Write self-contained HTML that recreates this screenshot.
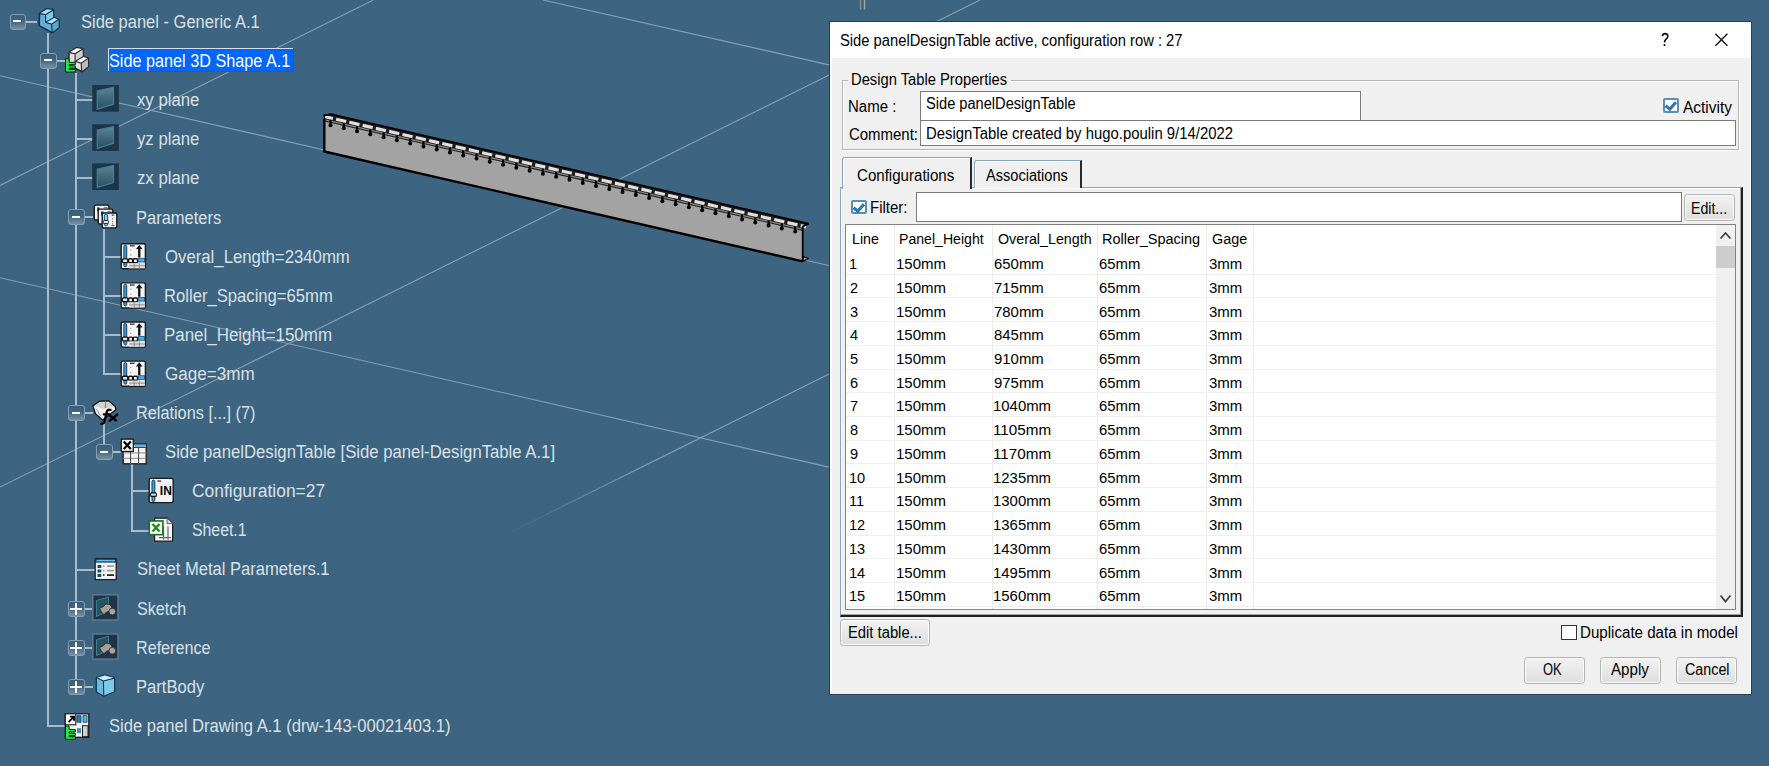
<!DOCTYPE html><html><head><meta charset="utf-8"><style>
*{box-sizing:border-box}
html,body{margin:0;padding:0}
body{width:1769px;height:766px;overflow:hidden;background:#3d6480;position:relative;font-family:"Liberation Sans",sans-serif}
.tx{position:absolute;white-space:nowrap;transform-origin:0 0;line-height:1}
.ab{position:absolute}
.exp{position:absolute;width:16.5px;height:16px;border:1.5px solid #86a0b3;border-radius:3px;background:linear-gradient(#3b5d78,#44657f 45%,#7690a2)}
.exp:before{content:"";position:absolute;left:2.7px;top:5.5px;width:8px;height:2px;background:#f6f8fa}
.exp.plus:before{left:0.8px;width:11.7px;top:6.3px}
.exp.plus:after{content:"";position:absolute;left:5.7px;top:1.4px;width:2px;height:11.7px;background:#f6f8fa}
.vl{position:absolute;width:2px;background:#a9bccb}
.hl{position:absolute;height:2px;background:#a9bccb}
.btn{position:absolute;border:1px solid #b3b3b3;border-radius:3.5px;background:linear-gradient(#f2f2f2,#e6e6e6 60%,#dedede);box-shadow:inset 0 0 0 1px #fafafa}
.inp{position:absolute;background:#fff;border:1px solid #7a7a7a}
</style></head><body>

<svg class="ab" style="left:0;top:0" width="1769" height="766" viewBox="0 0 1769 766">
<line x1="0" y1="75.7" x2="830" y2="265.8" stroke="#87a0b3" stroke-width="1.1" fill="none"/>
<line x1="0" y1="185.4" x2="373.4" y2="0" stroke="#87a0b3" stroke-width="1.1" fill="none"/>
<line x1="0" y1="277.7" x2="830" y2="467.4" stroke="#87a0b3" stroke-width="1.1" fill="none"/>
<line x1="0" y1="487" x2="980" y2="0" stroke="#87a0b3" stroke-width="1.1" fill="none"/>
<line x1="543" y1="0" x2="830" y2="65.1" stroke="#87a0b3" stroke-width="1.1" fill="none"/>
<defs><linearGradient id="l6g" gradientUnits="userSpaceOnUse" x1="505" y1="535" x2="640" y2="468"><stop offset="0" stop-color="#87a0b3" stop-opacity="0"/><stop offset="1" stop-color="#87a0b3" stop-opacity="1"/></linearGradient></defs>
<line x1="505" y1="535" x2="830" y2="373.5" stroke="url(#l6g)" stroke-width="1.1"/>
<line x1="860.5" y1="0" x2="860.5" y2="9.6" stroke="#8f8a84" stroke-width="1.5"/>
<line x1="864.5" y1="0" x2="864.5" y2="9.6" stroke="#9aa4ab" stroke-width="1.5"/>
</svg>
<svg class="ab" style="left:0;top:0" width="840" height="300">
<polygon points="323.4,116.53 802.7,226.29 802.7,261.3 323.4,151.5" fill="#a3a3a3"/>
<polygon points="323.4,115.03 330.7,114.2 808.6,223.64 802.7,226.49 802.7,230.89 323.4,121.13" fill="#1e1e1e"/>
<polygon points="325,119.19 802,228.43 802,229.63 325,120.39" fill="#8c8c8c"/>
<polygon points="325.50,115.21 333.20,116.97 332.60,120.07 324.90,118.31" fill="#e0e0e0"/>
<polygon points="336.38,117.70 346.47,120.01 345.87,123.11 335.77,120.80" fill="#e0e0e0"/>
<polygon points="349.65,120.74 359.75,123.05 359.15,126.15 349.05,123.84" fill="#e0e0e0"/>
<polygon points="362.93,123.78 373.02,126.09 372.42,129.19 362.32,126.88" fill="#e0e0e0"/>
<polygon points="376.20,126.82 386.30,129.13 385.70,132.23 375.60,129.92" fill="#e0e0e0"/>
<polygon points="389.48,129.86 399.57,132.17 398.97,135.27 388.88,132.96" fill="#e0e0e0"/>
<polygon points="402.75,132.90 412.85,135.21 412.25,138.31 402.15,136.00" fill="#e0e0e0"/>
<polygon points="416.03,135.94 426.12,138.25 425.52,141.35 415.43,139.04" fill="#e0e0e0"/>
<polygon points="429.30,138.98 439.40,141.29 438.80,144.39 428.70,142.08" fill="#e0e0e0"/>
<polygon points="442.58,142.02 452.68,144.33 452.07,147.43 441.98,145.12" fill="#e0e0e0"/>
<polygon points="455.85,145.06 465.95,147.37 465.35,150.47 455.25,148.16" fill="#e0e0e0"/>
<polygon points="469.12,148.10 479.22,150.41 478.62,153.51 468.52,151.20" fill="#e0e0e0"/>
<polygon points="482.40,151.14 492.50,153.45 491.90,156.55 481.80,154.24" fill="#e0e0e0"/>
<polygon points="495.68,154.18 505.78,156.49 505.18,159.59 495.08,157.28" fill="#e0e0e0"/>
<polygon points="508.95,157.22 519.05,159.53 518.45,162.63 508.35,160.32" fill="#e0e0e0"/>
<polygon points="522.23,160.26 532.33,162.57 531.73,165.67 521.62,163.36" fill="#e0e0e0"/>
<polygon points="535.50,163.30 545.60,165.61 545.00,168.71 534.90,166.40" fill="#e0e0e0"/>
<polygon points="548.77,166.34 558.88,168.65 558.27,171.75 548.17,169.44" fill="#e0e0e0"/>
<polygon points="562.05,169.38 572.15,171.69 571.55,174.79 561.45,172.48" fill="#e0e0e0"/>
<polygon points="575.33,172.42 585.43,174.73 584.83,177.83 574.73,175.52" fill="#e0e0e0"/>
<polygon points="588.60,175.46 598.70,177.77 598.10,180.87 588.00,178.56" fill="#e0e0e0"/>
<polygon points="601.88,178.50 611.98,180.81 611.38,183.91 601.28,181.60" fill="#e0e0e0"/>
<polygon points="615.15,181.54 625.25,183.85 624.65,186.95 614.55,184.64" fill="#e0e0e0"/>
<polygon points="628.43,184.58 638.53,186.89 637.93,189.99 627.83,187.68" fill="#e0e0e0"/>
<polygon points="641.70,187.62 651.80,189.93 651.20,193.03 641.10,190.72" fill="#e0e0e0"/>
<polygon points="654.98,190.66 665.08,192.97 664.48,196.07 654.38,193.76" fill="#e0e0e0"/>
<polygon points="668.25,193.70 678.35,196.01 677.75,199.11 667.65,196.80" fill="#e0e0e0"/>
<polygon points="681.52,196.74 691.62,199.05 691.02,202.15 680.92,199.84" fill="#e0e0e0"/>
<polygon points="694.80,199.78 704.90,202.09 704.30,205.19 694.20,202.88" fill="#e0e0e0"/>
<polygon points="708.08,202.82 718.18,205.13 717.58,208.23 707.48,205.92" fill="#e0e0e0"/>
<polygon points="721.35,205.86 731.45,208.17 730.85,211.27 720.75,208.96" fill="#e0e0e0"/>
<polygon points="734.63,208.90 744.73,211.21 744.13,214.31 734.03,212.00" fill="#e0e0e0"/>
<polygon points="747.90,211.94 758.00,214.25 757.40,217.35 747.30,215.04" fill="#e0e0e0"/>
<polygon points="761.18,214.98 771.28,217.29 770.68,220.39 760.58,218.08" fill="#e0e0e0"/>
<polygon points="774.45,218.02 784.55,220.33 783.95,223.43 773.85,221.12" fill="#e0e0e0"/>
<polygon points="787.73,221.06 797.83,223.37 797.23,226.47 787.12,224.16" fill="#e0e0e0"/>
<polygon points="801.00,224.10 806.50,225.36 805.90,228.46 800.40,227.20" fill="#e0e0e0"/>
<path d="M330.50,120.15V124.95" stroke="#000" stroke-width="2.2"/><circle cx="330.50" cy="125.15" r="2.0" fill="#000"/>
<path d="M343.77,123.19V127.99" stroke="#000" stroke-width="2.2"/><circle cx="343.77" cy="128.19" r="2.0" fill="#000"/>
<path d="M357.05,126.23V131.03" stroke="#000" stroke-width="2.2"/><circle cx="357.05" cy="131.23" r="2.0" fill="#000"/>
<path d="M370.32,129.27V134.07" stroke="#000" stroke-width="2.2"/><circle cx="370.32" cy="134.27" r="2.0" fill="#000"/>
<path d="M383.60,132.31V137.11" stroke="#000" stroke-width="2.2"/><circle cx="383.60" cy="137.31" r="2.0" fill="#000"/>
<path d="M396.88,135.35V140.15" stroke="#000" stroke-width="2.2"/><circle cx="396.88" cy="140.35" r="2.0" fill="#000"/>
<path d="M410.15,138.39V143.19" stroke="#000" stroke-width="2.2"/><circle cx="410.15" cy="143.39" r="2.0" fill="#000"/>
<path d="M423.43,141.43V146.23" stroke="#000" stroke-width="2.2"/><circle cx="423.43" cy="146.43" r="2.0" fill="#000"/>
<path d="M436.70,144.47V149.27" stroke="#000" stroke-width="2.2"/><circle cx="436.70" cy="149.47" r="2.0" fill="#000"/>
<path d="M449.98,147.51V152.31" stroke="#000" stroke-width="2.2"/><circle cx="449.98" cy="152.51" r="2.0" fill="#000"/>
<path d="M463.25,150.55V155.35" stroke="#000" stroke-width="2.2"/><circle cx="463.25" cy="155.55" r="2.0" fill="#000"/>
<path d="M476.52,153.59V158.39" stroke="#000" stroke-width="2.2"/><circle cx="476.52" cy="158.59" r="2.0" fill="#000"/>
<path d="M489.80,156.63V161.43" stroke="#000" stroke-width="2.2"/><circle cx="489.80" cy="161.63" r="2.0" fill="#000"/>
<path d="M503.08,159.67V164.47" stroke="#000" stroke-width="2.2"/><circle cx="503.08" cy="164.67" r="2.0" fill="#000"/>
<path d="M516.35,162.71V167.51" stroke="#000" stroke-width="2.2"/><circle cx="516.35" cy="167.71" r="2.0" fill="#000"/>
<path d="M529.62,165.75V170.55" stroke="#000" stroke-width="2.2"/><circle cx="529.62" cy="170.75" r="2.0" fill="#000"/>
<path d="M542.90,168.79V173.59" stroke="#000" stroke-width="2.2"/><circle cx="542.90" cy="173.79" r="2.0" fill="#000"/>
<path d="M556.17,171.83V176.63" stroke="#000" stroke-width="2.2"/><circle cx="556.17" cy="176.83" r="2.0" fill="#000"/>
<path d="M569.45,174.87V179.67" stroke="#000" stroke-width="2.2"/><circle cx="569.45" cy="179.87" r="2.0" fill="#000"/>
<path d="M582.73,177.91V182.71" stroke="#000" stroke-width="2.2"/><circle cx="582.73" cy="182.91" r="2.0" fill="#000"/>
<path d="M596.00,180.95V185.75" stroke="#000" stroke-width="2.2"/><circle cx="596.00" cy="185.95" r="2.0" fill="#000"/>
<path d="M609.28,183.99V188.79" stroke="#000" stroke-width="2.2"/><circle cx="609.28" cy="188.99" r="2.0" fill="#000"/>
<path d="M622.55,187.03V191.83" stroke="#000" stroke-width="2.2"/><circle cx="622.55" cy="192.03" r="2.0" fill="#000"/>
<path d="M635.83,190.07V194.87" stroke="#000" stroke-width="2.2"/><circle cx="635.83" cy="195.07" r="2.0" fill="#000"/>
<path d="M649.10,193.11V197.91" stroke="#000" stroke-width="2.2"/><circle cx="649.10" cy="198.11" r="2.0" fill="#000"/>
<path d="M662.38,196.15V200.95" stroke="#000" stroke-width="2.2"/><circle cx="662.38" cy="201.15" r="2.0" fill="#000"/>
<path d="M675.65,199.19V203.99" stroke="#000" stroke-width="2.2"/><circle cx="675.65" cy="204.19" r="2.0" fill="#000"/>
<path d="M688.92,202.23V207.03" stroke="#000" stroke-width="2.2"/><circle cx="688.92" cy="207.23" r="2.0" fill="#000"/>
<path d="M702.20,205.27V210.07" stroke="#000" stroke-width="2.2"/><circle cx="702.20" cy="210.27" r="2.0" fill="#000"/>
<path d="M715.48,208.31V213.11" stroke="#000" stroke-width="2.2"/><circle cx="715.48" cy="213.31" r="2.0" fill="#000"/>
<path d="M728.75,211.35V216.15" stroke="#000" stroke-width="2.2"/><circle cx="728.75" cy="216.35" r="2.0" fill="#000"/>
<path d="M742.03,214.39V219.19" stroke="#000" stroke-width="2.2"/><circle cx="742.03" cy="219.39" r="2.0" fill="#000"/>
<path d="M755.30,217.43V222.23" stroke="#000" stroke-width="2.2"/><circle cx="755.30" cy="222.43" r="2.0" fill="#000"/>
<path d="M768.58,220.47V225.27" stroke="#000" stroke-width="2.2"/><circle cx="768.58" cy="225.47" r="2.0" fill="#000"/>
<path d="M781.85,223.51V228.31" stroke="#000" stroke-width="2.2"/><circle cx="781.85" cy="228.51" r="2.0" fill="#000"/>
<path d="M795.12,226.55V231.35" stroke="#000" stroke-width="2.2"/><circle cx="795.12" cy="231.55" r="2.0" fill="#000"/>
<path d="M323.4,115.03Q325,115.5 330.7,114.2L808.6,223.64" stroke="#000" stroke-width="1.7" fill="none" stroke-linejoin="round"/>
<path d="M324.3,118.5V151.5L802.7,261.3" stroke="#000" stroke-width="2.4" fill="none" stroke-linejoin="round"/>
<path d="M802.7,226.29V261" stroke="#000" stroke-width="1.8" fill="none"/>
<path d="M808.6,223.64L802.7,226.49" stroke="#000" stroke-width="1.8" fill="none"/>
<polygon points="802.7,261.3 808.3,258.3 803.5,256.8" fill="#d6d6d6" stroke="#000" stroke-width="1.4" stroke-linejoin="round"/>
</svg>
<div class="vl" style="left:47.4px;top:33.0px;height:694.0px"></div>
<div class="hl" style="left:48.4px;top:725.3px;width:16.6px"></div>
<div class="hl" style="left:25.0px;top:20.6px;width:12.0px"></div>
<div class="hl" style="left:56.0px;top:59.8px;width:9.0px"></div>
<div class="vl" style="left:75.2px;top:73.0px;height:614.1px"></div>
<div class="hl" style="left:76.2px;top:98.9px;width:16.8px"></div>
<div class="hl" style="left:76.2px;top:138.0px;width:16.8px"></div>
<div class="hl" style="left:76.2px;top:177.2px;width:16.8px"></div>
<div class="hl" style="left:84.0px;top:216.3px;width:9.0px"></div>
<div class="hl" style="left:84.0px;top:412.1px;width:9.0px"></div>
<div class="hl" style="left:84.0px;top:607.9px;width:9.0px"></div>
<div class="hl" style="left:84.0px;top:647.0px;width:9.0px"></div>
<div class="hl" style="left:84.0px;top:686.1px;width:9.0px"></div>
<div class="hl" style="left:76.2px;top:568.7px;width:18.8px"></div>
<div class="vl" style="left:103.0px;top:229.0px;height:145.9px"></div>
<div class="hl" style="left:104.0px;top:255.5px;width:17.0px"></div>
<div class="hl" style="left:104.0px;top:294.7px;width:17.0px"></div>
<div class="hl" style="left:104.0px;top:333.8px;width:17.0px"></div>
<div class="hl" style="left:104.0px;top:372.9px;width:17.0px"></div>
<div class="vl" style="left:103.0px;top:424.0px;height:22.0px"></div>
<div class="hl" style="left:111.0px;top:451.2px;width:10.0px"></div>
<div class="vl" style="left:131.0px;top:464.0px;height:67.5px"></div>
<div class="hl" style="left:132.0px;top:490.4px;width:17.0px"></div>
<div class="hl" style="left:132.0px;top:529.5px;width:17.0px"></div>
<div class="exp" style="left:9.8px;top:13.6px"></div>
<div class="exp" style="left:40.4px;top:52.8px"></div>
<div class="exp" style="left:68.2px;top:209.3px"></div>
<div class="exp" style="left:68.2px;top:405.1px"></div>
<div class="exp" style="left:96.0px;top:444.2px"></div>
<div class="exp plus" style="left:68.2px;top:600.9px"></div>
<div class="exp plus" style="left:68.2px;top:640.0px"></div>
<div class="exp plus" style="left:68.2px;top:679.1px"></div>
<svg class="ab" style="left:0;top:0" width="840" height="766">
<defs><linearGradient id="pg" x1="0" y1="0" x2="0" y2="1"><stop offset="0" stop-color="#5a8494"/><stop offset="1" stop-color="#2b4f60"/></linearGradient></defs>
<polygon points="39.50,13.50 47.00,8.80 53.40,9.60 53.60,17.60 58.80,19.20 59.00,27.50 52.40,32.80 39.20,25.60" fill="#63b0d6" stroke="#0c3450" stroke-width="1.6" stroke-linejoin="round"/>
<polygon points="39.80,13.60 47.00,9.20 53.00,10.00 45.60,14.80" fill="#a9dcf2"/>
<polygon points="45.60,14.80 53.00,10.00 53.20,17.80 45.60,22.40" fill="#84c8e6"/>
<polygon points="45.60,22.40 53.40,17.80 58.40,19.50 51.60,24.20" fill="#b0e2f6"/>
<polygon points="51.60,24.20 58.40,19.50 58.60,27.30 52.20,32.20" fill="#5aa8cf"/>
<path d="M39.80,13.60L45.60,14.80L45.60,22.40L51.60,24.20L52.30,32.50M45.60,14.80L53.20,10.00M51.60,24.20L58.60,19.40M45.60,22.40L53.40,17.80" stroke="#0c3450" stroke-width="1.1" fill="none"/>
<polygon points="69.00,52.50 76.50,47.80 82.90,48.60 83.10,56.60 88.30,58.20 88.50,66.50 81.90,71.80 68.70,64.60" fill="#e2e2e2" stroke="#2a2a2a" stroke-width="1.6" stroke-linejoin="round"/>
<polygon points="69.30,52.60 76.50,48.20 82.50,49.00 75.10,53.80" fill="#ffffff"/>
<polygon points="75.10,53.80 82.50,49.00 82.70,56.80 75.10,61.40" fill="#d0d0d0"/>
<polygon points="75.10,61.40 82.90,56.80 87.90,58.50 81.10,63.20" fill="#f4f4f4"/>
<polygon points="81.10,63.20 87.90,58.50 88.10,66.30 81.70,71.20" fill="#bcbcbc"/>
<path d="M69.30,52.60L75.10,53.80L75.10,61.40L81.10,63.20L81.80,71.50M75.10,53.80L82.70,49.00M81.10,63.20L88.10,58.40M75.10,61.40L82.90,56.80" stroke="#2a2a2a" stroke-width="1.1" fill="none"/>
<path d="M65.5,58.7h3.6v3.6h6.2v2.3h-6.2v1.3h6.2v2.3h-6.2v1.2h6.2v2.6h-9.8z" fill="#1ff044" stroke="#05200a" stroke-width="1"/>
<rect x="92.2" y="85.10" width="26.6" height="26.6" fill="#1f3445"/><polygon points="97.3,90.90 113.5,87.30 113.5,104.20 97.3,109.10" fill="url(#pg)" stroke="#3b7ea8" stroke-width="1.3"/>
<rect x="92.2" y="124.25" width="26.6" height="26.6" fill="#1f3445"/><polygon points="97.3,130.05 113.5,126.45 113.5,143.35 97.3,148.25" fill="url(#pg)" stroke="#3b7ea8" stroke-width="1.3"/>
<rect x="92.2" y="163.40" width="26.6" height="26.6" fill="#1f3445"/><polygon points="97.3,169.20 113.5,165.60 113.5,182.50 97.3,187.40" fill="url(#pg)" stroke="#3b7ea8" stroke-width="1.3"/>
<rect x="94.30" y="205.15" width="14.60" height="14.80" rx="1.5" fill="#f3f3f3" stroke="#1b1b1b" stroke-width="1.4"/>
<rect x="97.10" y="207.45" width="2.5" height="4" fill="#0a3c66"/>
<rect x="103.60" y="206.95" width="4" height="1.5" fill="#888"/>
<rect x="98.20" y="209.15" width="14.60" height="14.80" rx="1.5" fill="#f3f3f3" stroke="#1b1b1b" stroke-width="1.4"/>
<rect x="101.00" y="211.45" width="2.5" height="4" fill="#0a3c66"/>
<rect x="107.50" y="210.95" width="4" height="1.5" fill="#888"/>
<rect x="102.20" y="213.05" width="14.60" height="14.80" rx="1.5" fill="#f3f3f3" stroke="#1b1b1b" stroke-width="1.4"/>
<rect x="104.30" y="214.35" width="3.4" height="11.5" rx="1.5" fill="#7fd0f2" stroke="#0a4a78" stroke-width="1"/>
<rect x="103.40" y="220.55" width="5.2" height="3" rx="1" fill="#e8e8e8" stroke="#222" stroke-width="1"/>
<rect x="112.10" y="215.05" width="1" height="1" fill="#555"/>
<rect x="112.10" y="218.35" width="1" height="1" fill="#555"/>
<rect x="112.10" y="220.85" width="1" height="1" fill="#555"/>
<rect x="112.10" y="223.35" width="1" height="1" fill="#555"/>
<rect x="111.50" y="214.55" width="3" height="0.9" fill="#444"/><rect x="111.50" y="224.95" width="3" height="0.9" fill="#444"/>
<rect x="121.20" y="243.70" width="24.20" height="25.10" rx="1.5" fill="#f3f3f3" stroke="#1b1b1b" stroke-width="1.4"/>
<rect x="123.9" y="245.20" width="2.8" height="21.5" rx="1.4" fill="#3fa3d6" stroke="#0a3c66" stroke-width="1"/>
<rect x="130" y="245.20" width="4.5" height="1.3" fill="#333"/>
<rect x="130.3" y="249.50" width="1" height="1" fill="#888"/><rect x="130.3" y="254.50" width="1" height="1" fill="#888"/>
<path d="M139.2,244.90L142.5,249.10L140.4,249.10L140.4,257.50L138.1,257.50L138.1,249.10L136,249.10Z" fill="#111"/>
<rect x="122.4" y="258.80" width="5.4" height="3.8" rx="1" fill="#e6e6e6" stroke="#111" stroke-width="1.3"/>
<rect x="128.6" y="258.80" width="4" height="4" rx="1.2" fill="#fafafa" stroke="#111" stroke-width="1.4"/>
<rect x="133.3" y="258.80" width="4.2" height="4" rx="1.2" fill="#fafafa" stroke="#111" stroke-width="1.4"/>
<path d="M127.8,260.00h1M132.6,260.00h0.8" stroke="#111" stroke-width="1.2"/>
<rect x="138.2" y="258.30" width="6.2" height="3.6" fill="#4aaee2" stroke="#0a4a78" stroke-width="0.8"/>
<rect x="129.2" y="263.10" width="15.6" height="5.3" fill="#dedede"/>
<path d="M129.2,265.70h15.6M134.2,263.10v5.3M139.4,263.10v5.3" stroke="#8a8a8a" stroke-width="0.9"/>
<rect x="121.20" y="282.85" width="24.20" height="25.10" rx="1.5" fill="#f3f3f3" stroke="#1b1b1b" stroke-width="1.4"/>
<rect x="123.9" y="284.35" width="2.8" height="21.5" rx="1.4" fill="#3fa3d6" stroke="#0a3c66" stroke-width="1"/>
<rect x="130" y="284.35" width="4.5" height="1.3" fill="#333"/>
<rect x="130.3" y="288.65" width="1" height="1" fill="#888"/><rect x="130.3" y="293.65" width="1" height="1" fill="#888"/>
<path d="M139.2,284.05L142.5,288.25L140.4,288.25L140.4,296.65L138.1,296.65L138.1,288.25L136,288.25Z" fill="#111"/>
<rect x="122.4" y="297.95" width="5.4" height="3.8" rx="1" fill="#e6e6e6" stroke="#111" stroke-width="1.3"/>
<rect x="128.6" y="297.95" width="4" height="4" rx="1.2" fill="#fafafa" stroke="#111" stroke-width="1.4"/>
<rect x="133.3" y="297.95" width="4.2" height="4" rx="1.2" fill="#fafafa" stroke="#111" stroke-width="1.4"/>
<path d="M127.8,299.15h1M132.6,299.15h0.8" stroke="#111" stroke-width="1.2"/>
<rect x="138.2" y="297.45" width="6.2" height="3.6" fill="#4aaee2" stroke="#0a4a78" stroke-width="0.8"/>
<rect x="129.2" y="302.25" width="15.6" height="5.3" fill="#dedede"/>
<path d="M129.2,304.85h15.6M134.2,302.25v5.3M139.4,302.25v5.3" stroke="#8a8a8a" stroke-width="0.9"/>
<rect x="121.20" y="322.00" width="24.20" height="25.10" rx="1.5" fill="#f3f3f3" stroke="#1b1b1b" stroke-width="1.4"/>
<rect x="123.9" y="323.50" width="2.8" height="21.5" rx="1.4" fill="#3fa3d6" stroke="#0a3c66" stroke-width="1"/>
<rect x="130" y="323.50" width="4.5" height="1.3" fill="#333"/>
<rect x="130.3" y="327.80" width="1" height="1" fill="#888"/><rect x="130.3" y="332.80" width="1" height="1" fill="#888"/>
<path d="M139.2,323.20L142.5,327.40L140.4,327.40L140.4,335.80L138.1,335.80L138.1,327.40L136,327.40Z" fill="#111"/>
<rect x="122.4" y="337.10" width="5.4" height="3.8" rx="1" fill="#e6e6e6" stroke="#111" stroke-width="1.3"/>
<rect x="128.6" y="337.10" width="4" height="4" rx="1.2" fill="#fafafa" stroke="#111" stroke-width="1.4"/>
<rect x="133.3" y="337.10" width="4.2" height="4" rx="1.2" fill="#fafafa" stroke="#111" stroke-width="1.4"/>
<path d="M127.8,338.30h1M132.6,338.30h0.8" stroke="#111" stroke-width="1.2"/>
<rect x="138.2" y="336.60" width="6.2" height="3.6" fill="#4aaee2" stroke="#0a4a78" stroke-width="0.8"/>
<rect x="129.2" y="341.40" width="15.6" height="5.3" fill="#dedede"/>
<path d="M129.2,344.00h15.6M134.2,341.40v5.3M139.4,341.40v5.3" stroke="#8a8a8a" stroke-width="0.9"/>
<rect x="121.20" y="361.15" width="24.20" height="25.10" rx="1.5" fill="#f3f3f3" stroke="#1b1b1b" stroke-width="1.4"/>
<rect x="123.9" y="362.65" width="2.8" height="21.5" rx="1.4" fill="#3fa3d6" stroke="#0a3c66" stroke-width="1"/>
<rect x="130" y="362.65" width="4.5" height="1.3" fill="#333"/>
<rect x="130.3" y="366.95" width="1" height="1" fill="#888"/><rect x="130.3" y="371.95" width="1" height="1" fill="#888"/>
<path d="M139.2,362.35L142.5,366.55L140.4,366.55L140.4,374.95L138.1,374.95L138.1,366.55L136,366.55Z" fill="#111"/>
<rect x="122.4" y="376.25" width="5.4" height="3.8" rx="1" fill="#e6e6e6" stroke="#111" stroke-width="1.3"/>
<rect x="128.6" y="376.25" width="4" height="4" rx="1.2" fill="#fafafa" stroke="#111" stroke-width="1.4"/>
<rect x="133.3" y="376.25" width="4.2" height="4" rx="1.2" fill="#fafafa" stroke="#111" stroke-width="1.4"/>
<path d="M127.8,377.45h1M132.6,377.45h0.8" stroke="#111" stroke-width="1.2"/>
<rect x="138.2" y="375.75" width="6.2" height="3.6" fill="#4aaee2" stroke="#0a4a78" stroke-width="0.8"/>
<rect x="129.2" y="380.55" width="15.6" height="5.3" fill="#dedede"/>
<path d="M129.2,383.15h15.6M134.2,380.55v5.3M139.4,380.55v5.3" stroke="#8a8a8a" stroke-width="0.9"/>
<polygon points="92.80,405.80 99.60,401.20 108.50,400.80 115.20,406.50 116.00,409.50 108.00,416.00 102.50,420.00 95.50,413.80" fill="#efefef" stroke="#1a1a1a" stroke-width="1.4" stroke-linejoin="round"/>
<polygon points="94.50,406.00 100.00,402.30 108.00,402.00 113.50,406.50 104.00,409.00" fill="#d2d2d2"/>
<path d="M105.5,401.50V408.00" stroke="#8a8a8a" stroke-width="1.3"/>
<path d="M96.5,409.00L100.5,416.00" stroke="#9a9a9a" stroke-width="1"/>
<path d="M110.6,410.00Q107.5,408.80 106.6,412.50L104.6,421.00Q103.8,424.00 101.2,423.80M103.8,414.30H109" stroke="#000" stroke-width="2.3" fill="none" stroke-linecap="round"/>
<path d="M109,414.80L116,420.50M117.3,414.50L109.5,420.80" stroke="#000" stroke-width="2.3" fill="none" stroke-linecap="round"/>
<rect x="123.20" y="444.10" width="23" height="19.7" fill="#f4f4f4" stroke="#1b1b1b" stroke-width="1.3"/>
<rect x="134.60" y="444.50" width="11.3" height="3" fill="#5ab4e4"/>
<path d="M123.20,452.90h23" stroke="#8a8a8a" stroke-width="1"/>
<path d="M123.20,458.30h23" stroke="#8a8a8a" stroke-width="1"/>
<path d="M123.20,447.50h23M130.60,447.50v16.3M138.60,447.50v16.3" stroke="#444" stroke-width="1"/>
<rect x="121.3" y="439.15" width="12" height="12.3" fill="#f6f6f6" stroke="#1b1b1b" stroke-width="1.3"/>
<path d="M123.8,441.45L130.8,448.95M130.8,441.45L123.8,448.95" stroke="#000" stroke-width="2.2"/>
<rect x="149.20" y="478.40" width="24.00" height="24.20" rx="1.5" fill="#f3f3f3" stroke="#1b1b1b" stroke-width="1.4"/>
<rect x="152" y="480.10" width="2.8" height="21.5" rx="1.4" fill="#3fa3d6" stroke="#0a3c66" stroke-width="1"/>
<rect x="150.6" y="492.90" width="5.8" height="3.5" rx="1" fill="#ddd" stroke="#111" stroke-width="1.1"/>
<rect x="157.5" y="480.40" width="3.5" height="1.3" fill="#333"/>
<text x="159.8" y="495.40" font-family="Liberation Sans" font-weight="bold" font-size="12.5" fill="#000" textLength="12" lengthAdjust="spacingAndGlyphs">IN</text>
<path d="M154.60,518.15h12.5l5.5,5.5v17.5h-18z" fill="#f6f6f6" stroke="#1b1b1b" stroke-width="1.2"/>
<path d="M167.10,518.15v5.5h5.5" fill="#ddd" stroke="#444" stroke-width="0.8"/>
<path d="M163.50,526.55v13M168.00,526.55v13M159.00,537.55h12" stroke="#666" stroke-width="1.2"/>
<rect x="149.3" y="520.95" width="13.6" height="13.7" fill="#fff" stroke="#187018" stroke-width="1.6"/>
<path d="M152.5,524.05L159.5,531.55M159.5,524.05L152.5,531.55" stroke="#1f8a1f" stroke-width="2.4"/>
<rect x="95.2" y="558.60" width="21" height="21" fill="#f4f4f4" stroke="#222" stroke-width="1.3"/>
<rect x="95.2" y="558.60" width="21" height="4" fill="#0a3a5a"/>
<rect x="96.5" y="559.80" width="18.5" height="1.6" fill="#6cbde4"/>
<rect x="97.5" y="565.00" width="3.8" height="3" fill="#0f4f78"/>
<rect x="103" y="565.30" width="1.5" height="1.5" fill="#999"/><rect x="107" y="565.30" width="7" height="1.6" fill="#999"/>
<rect x="97.5" y="569.50" width="3.8" height="3" fill="#0f4f78"/>
<rect x="103" y="569.80" width="1.5" height="1.5" fill="#999"/><rect x="107" y="569.80" width="7" height="1.6" fill="#999"/>
<rect x="97.5" y="574.00" width="3.8" height="3" fill="#0f4f78"/>
<rect x="103" y="574.30" width="1.5" height="1.5" fill="#111"/><rect x="107" y="574.30" width="7" height="1.6" fill="#111"/>
<rect x="92.8" y="594.80" width="25.2" height="25.2" fill="#1e3447" stroke="#61798b" stroke-width="1.5"/>
<polygon points="96.5,600.50 108.5,597.00 108.5,611.00 96.5,616.50" fill="#2c5262" stroke="#3f7f92" stroke-width="1"/>
<path d="M99.5,608.50L103.5,606.50L106,604.00L109.5,604.50L112,607.00L110,611.00L106.5,612.00L104,614.50L101.5,612.00Z" fill="#a4a09c" stroke="#222" stroke-width="0.8"/>
<circle cx="112.3" cy="611.60" r="3.4" fill="#a8a4a0" stroke="#222" stroke-width="0.8"/>
<rect x="92.8" y="633.95" width="25.2" height="25.2" fill="#1e3447" stroke="#61798b" stroke-width="1.5"/>
<polygon points="96.5,639.65 108.5,636.15 108.5,650.15 96.5,655.65" fill="#2c5262" stroke="#3f7f92" stroke-width="1"/>
<path d="M99.5,647.65L103.5,645.65L106,643.15L109.5,643.65L112,646.15L110,650.15L106.5,651.15L104,653.65L101.5,651.15Z" fill="#a4a09c" stroke="#222" stroke-width="0.8"/>
<circle cx="112.3" cy="650.75" r="3.4" fill="#a8a4a0" stroke="#222" stroke-width="0.8"/>
<polygon points="96.3,677.50 105,674.80 114.6,677.80 114.6,691.50 103.8,696.20 96.3,692.00" fill="#6cb8e0" stroke="#0d3a55" stroke-width="1.3" stroke-linejoin="round"/>
<polygon points="97,677.70 105,675.50 114,678.00 103,680.80" fill="#c4ecfa"/>
<polygon points="103.4,681.00 114,678.30 114,691.20 103.8,695.50" fill="#7fc8ea"/>
<path d="M97,677.70L103.4,681.00L103.8,695.80M103.4,681.00L114.3,678.20" stroke="#0d3a55" stroke-width="1.1" fill="none"/>
<rect x="65.3" y="713.80" width="23.5" height="23.5" fill="#f2f2f2" stroke="#1b1b1b" stroke-width="1.3"/>
<rect x="65.3" y="713.80" width="10.5" height="11" fill="#fff" stroke="#1b1b1b" stroke-width="1.1"/>
<path d="M68.5,722.20L73,717.70M70,716.70h4v4" stroke="#000" stroke-width="1.8" fill="none"/>
<rect x="77" y="715.70" width="4" height="6.5" fill="#2a7db0" stroke="#0a3c66" stroke-width="0.8"/><rect x="83" y="715.70" width="4" height="6.5" fill="#5ab2e2" stroke="#0a3c66" stroke-width="0.8"/>
<rect x="77" y="728.20" width="4" height="5" fill="#3a8cc0"/>
<rect x="82.5" y="725.70" width="5.5" height="11" fill="#cfcfcf" stroke="#111" stroke-width="0.9"/>
<path d="M65.5,725.9999999999999h3.6v3.6h6.2v2.3h-6.2v1.3h6.2v2.3h-6.2v1.2h6.2v2.6h-9.8z" fill="#1ff044" stroke="#05200a" stroke-width="1"/>
</svg>
<div class="tx" style="left:80.70px;top:14.04px;font-size:17.2px;color:#d9e1e7;transform-origin:0 14.56px;transform:scale(0.9593,1.05);">Side panel - Generic A.1</div>
<div class="ab" style="left:108px;top:48.3px;width:185px;height:23.2px;background:#0266fc;border-top:1.5px solid #d4e0f4;border-left:1.5px solid #d4e0f4;box-shadow:1px 1px 0 #4a5560"></div>
<div class="tx" style="left:109.40px;top:52.74px;font-size:17.2px;color:#ffffff;transform-origin:0 14.56px;transform:scale(0.9435,1.05);">Side panel 3D Shape A.1</div>
<div class="tx" style="left:137.00px;top:92.24px;font-size:17.2px;color:#d9e1e7;transform-origin:0 14.56px;transform:scale(0.9739,1.05);">xy plane</div>
<div class="tx" style="left:137.00px;top:131.34px;font-size:17.2px;color:#d9e1e7;transform-origin:0 14.56px;transform:scale(0.9739,1.05);">yz plane</div>
<div class="tx" style="left:137.00px;top:170.44px;font-size:17.2px;color:#d9e1e7;transform-origin:0 14.56px;transform:scale(0.9739,1.05);">zx plane</div>
<div class="tx" style="left:136.04px;top:209.54px;font-size:17.2px;color:#d9e1e7;transform-origin:0 14.56px;transform:scale(0.9583,1.05);">Parameters</div>
<div class="tx" style="left:165.00px;top:248.64px;font-size:17.2px;color:#d9e1e7;transform-origin:0 14.56px;transform:scale(0.9744,1.05);">Overal_Length=2340mm</div>
<div class="tx" style="left:164.03px;top:287.74px;font-size:17.2px;color:#d9e1e7;transform-origin:0 14.56px;transform:scale(0.9680,1.05);">Roller_Spacing=65mm</div>
<div class="tx" style="left:164.01px;top:326.84px;font-size:17.2px;color:#d9e1e7;transform-origin:0 14.56px;transform:scale(0.9850,1.05);">Panel_Height=150mm</div>
<div class="tx" style="left:165.00px;top:365.94px;font-size:17.2px;color:#d9e1e7;transform-origin:0 14.56px;transform:scale(0.9938,1.05);">Gage=3mm</div>
<div class="tx" style="left:136.05px;top:405.04px;font-size:17.2px;color:#d9e1e7;transform-origin:0 14.56px;transform:scale(0.9472,1.05);">Relations [...] (7)</div>
<div class="tx" style="left:165.00px;top:444.14px;font-size:17.2px;color:#d9e1e7;transform-origin:0 14.56px;transform:scale(0.9719,1.05);">Side panelDesignTable [Side panel-DesignTable A.1]</div>
<div class="tx" style="left:192.40px;top:483.24px;font-size:17.2px;color:#d9e1e7;transform-origin:0 14.56px;transform:scale(1.0135,1.05);">Configuration=27</div>
<div class="tx" style="left:192.40px;top:522.34px;font-size:17.2px;color:#d9e1e7;transform-origin:0 14.56px;transform:scale(0.9201,1.05);">Sheet.1</div>
<div class="tx" style="left:137.00px;top:561.44px;font-size:17.2px;color:#d9e1e7;transform-origin:0 14.56px;transform:scale(0.9643,1.05);">Sheet Metal Parameters.1</div>
<div class="tx" style="left:137.00px;top:600.54px;font-size:17.2px;color:#d9e1e7;transform-origin:0 14.56px;transform:scale(0.9349,1.05);">Sketch</div>
<div class="tx" style="left:136.06px;top:639.64px;font-size:17.2px;color:#d9e1e7;transform-origin:0 14.56px;transform:scale(0.9390,1.05);">Reference</div>
<div class="tx" style="left:136.03px;top:678.74px;font-size:17.2px;color:#d9e1e7;transform-origin:0 14.56px;transform:scale(0.9657,1.05);">PartBody</div>
<div class="tx" style="left:109.40px;top:717.84px;font-size:17.2px;color:#d9e1e7;transform-origin:0 14.56px;transform:scale(0.9660,1.05);">Side panel Drawing A.1 (drw-143-00021403.1)</div>
<div class="ab" style="left:829px;top:21px;width:923px;height:674px;background:#f0f0f0;border:1px solid #2b3d4c"></div>
<div class="ab" style="left:830px;top:22px;width:921px;height:36px;background:#fff"></div>
<div class="ab" style="left:830px;top:58px;width:2px;height:636px;background:#fff"></div>
<div class="ab" style="left:1750px;top:59px;width:1px;height:635px;background:#fff"></div>
<div class="tx" style="left:839.60px;top:33.49px;font-size:15.6px;color:#000;transform:scaleX(0.9453);">Side panelDesignTable active, configuration row : 27</div>
<svg class="ab" style="left:1655px;top:28px" width="20" height="24"><path d="M7.3,8.2Q7.8,5.6 10,5.6Q12.8,5.7 12.8,8.3Q12.8,10.2 10.8,11.5Q9.5,12.4 9.5,14.6" stroke="#111" stroke-width="1.6" fill="none"/><circle cx="9.5" cy="17.1" r="1.05" fill="#111"/></svg>
<svg class="ab" style="left:1710px;top:28px" width="24" height="24"><path d="M5.4 5.7L17.4 17.7M17.4 5.7L5.4 17.7" stroke="#111" stroke-width="1.35" fill="none"/></svg>
<div class="ab" style="left:842px;top:80px;width:897px;height:70px;border:1px solid #b4b4b4;box-shadow:inset 1px 1px 0 #fff, 1px 1px 0 #fff"></div>
<div class="ab" style="left:848px;top:72px;width:163px;height:14px;background:#f0f0f0"></div>
<div class="tx" style="left:851.05px;top:72.49px;font-size:15.6px;color:#000;transform:scaleX(0.9450);">Design Table Properties</div>
<div class="tx" style="left:848.14px;top:99.49px;font-size:15.6px;color:#000;transform:scaleX(0.9619);">Name :</div>
<div class="inp" style="left:920px;top:91px;width:441px;height:30.5px"></div>
<div class="inp" style="left:920px;top:120px;width:816px;height:26px"></div>
<div class="tx" style="left:925.90px;top:96.19px;font-size:15.6px;color:#000;transform:scaleX(0.9374);">Side panelDesignTable</div>
<div class="tx" style="left:849.00px;top:126.59px;font-size:15.6px;color:#000;transform:scaleX(0.9591);">Comment:</div>
<div class="tx" style="left:925.65px;top:126.19px;font-size:15.6px;color:#000;transform:scaleX(0.9545);">DesignTable created by hugo.poulin 9/14/2022</div>
<div class="ab" style="left:1663.2px;top:98.1px;width:15.5px;height:14.5px;border:2px solid #5b8db5;border-radius:2px;background:#fff"></div>
<svg class="ab" style="left:1663.2px;top:98.1px" width="16" height="15"><path d="M2.6 7.8L6.8 11.1L13 4.3" stroke="#2e74ae" stroke-width="3" fill="none"/></svg>
<div class="tx" style="left:1682.70px;top:99.59px;font-size:15.6px;color:#000;transform:scaleX(0.9902);">Activity</div>
<div class="ab" style="left:840px;top:187px;width:903px;height:430px;background:#f0f0f0;border-left:1px solid #87a5c2;border-top:1px solid #87a5c2;border-right:2px solid #1f1f1f;border-bottom:2px solid #1f1f1f;box-shadow:inset -1px -1px 0 #a3a3a3, inset 1px 1px 0 #fff"></div>
<div class="ab" style="left:842px;top:157px;width:130px;height:32px;background:#f0f0f0;border-left:1px solid #87a5c2;border-top:1px solid #87a5c2;border-right:2px solid #2a2a2a;border-top-left-radius:3px;box-shadow:inset 1px 1px 0 #fff"></div>
<div class="ab" style="left:974px;top:160px;width:108px;height:28px;background:#f0f0f0;border-left:1px solid #87a5c2;border-top:1px solid #87a5c2;border-right:2px solid #2a2a2a;border-top-left-radius:3px;box-shadow:inset 1px 1px 0 #fff"></div>
<div class="tx" style="left:857.30px;top:168.09px;font-size:15.6px;color:#000;transform:scaleX(0.9677);">Configurations</div>
<div class="tx" style="left:986.40px;top:168.09px;font-size:15.6px;color:#000;transform:scaleX(0.9345);">Associations</div>
<div class="ab" style="left:851px;top:199.7px;width:15.5px;height:14.5px;border:2px solid #5b8db5;border-radius:2px;background:#fff"></div>
<svg class="ab" style="left:851px;top:199.7px" width="16" height="15"><path d="M2.6 7.8L6.8 11.1L13 4.3" stroke="#2e74ae" stroke-width="3" fill="none"/></svg>
<div class="tx" style="left:869.74px;top:200.19px;font-size:15.6px;color:#000;transform:scaleX(0.9631);">Filter:</div>
<div class="inp" style="left:916px;top:192px;width:766px;height:30px"></div>
<div class="btn" style="left:1684px;top:194px;width:51px;height:27px"></div>
<div class="tx" style="left:1691.29px;top:200.59px;font-size:15.6px;color:#000;transform:scaleX(0.9058);">Edit...</div>
<div class="ab" style="left:845px;top:224px;width:891px;height:386px;background:#fff;border:1px solid #828282"></div>
<div class="ab" style="left:893.8px;top:225px;width:1px;height:384px;background:#ececec"></div>
<div class="ab" style="left:991.6px;top:225px;width:1px;height:384px;background:#ececec"></div>
<div class="ab" style="left:1097.2px;top:225px;width:1px;height:384px;background:#ececec"></div>
<div class="ab" style="left:1206.1px;top:225px;width:1px;height:384px;background:#ececec"></div>
<div class="ab" style="left:1252.7px;top:225px;width:1px;height:384px;background:#ececec"></div>
<div class="ab" style="left:846px;top:273.5px;width:870px;height:1px;background:#efefef"></div>
<div class="ab" style="left:846px;top:297.2px;width:870px;height:1px;background:#efefef"></div>
<div class="ab" style="left:846px;top:321.0px;width:870px;height:1px;background:#efefef"></div>
<div class="ab" style="left:846px;top:344.7px;width:870px;height:1px;background:#efefef"></div>
<div class="ab" style="left:846px;top:368.5px;width:870px;height:1px;background:#efefef"></div>
<div class="ab" style="left:846px;top:392.2px;width:870px;height:1px;background:#efefef"></div>
<div class="ab" style="left:846px;top:415.9px;width:870px;height:1px;background:#efefef"></div>
<div class="ab" style="left:846px;top:439.7px;width:870px;height:1px;background:#efefef"></div>
<div class="ab" style="left:846px;top:463.4px;width:870px;height:1px;background:#efefef"></div>
<div class="ab" style="left:846px;top:487.2px;width:870px;height:1px;background:#efefef"></div>
<div class="ab" style="left:846px;top:510.9px;width:870px;height:1px;background:#efefef"></div>
<div class="ab" style="left:846px;top:534.6px;width:870px;height:1px;background:#efefef"></div>
<div class="ab" style="left:846px;top:558.4px;width:870px;height:1px;background:#efefef"></div>
<div class="ab" style="left:846px;top:582.1px;width:870px;height:1px;background:#efefef"></div>
<div class="ab" style="left:846px;top:605.9px;width:870px;height:1px;background:#efefef"></div>
<div class="tx" style="left:851.66px;top:230.73px;font-size:15.2px;color:#000;transform:scaleX(0.9389);">Line</div>
<div class="tx" style="left:899.47px;top:230.73px;font-size:15.2px;color:#000;transform:scaleX(0.9289);">Panel_Height</div>
<div class="tx" style="left:998.10px;top:230.73px;font-size:15.2px;color:#000;transform:scaleX(0.9397);">Overal_Length</div>
<div class="tx" style="left:1101.85px;top:230.73px;font-size:15.2px;color:#000;transform:scaleX(0.9522);">Roller_Spacing</div>
<div class="tx" style="left:1211.70px;top:230.73px;font-size:15.2px;color:#000;transform:scaleX(0.9453);">Gage</div>
<div class="tx" style="left:848.64px;top:256.03px;font-size:15.2px;color:#000;transform:scaleX(0.9600);">1</div>
<div class="tx" style="left:895.61px;top:256.03px;font-size:15.2px;color:#000;transform:scaleX(0.9859);">150mm</div>
<div class="tx" style="left:994.00px;top:256.03px;font-size:15.2px;color:#000;transform:scaleX(0.9822);">650mm</div>
<div class="tx" style="left:1099.40px;top:256.03px;font-size:15.2px;color:#000;transform:scaleX(0.9797);">65mm</div>
<div class="tx" style="left:1208.60px;top:256.03px;font-size:15.2px;color:#000;transform:scaleX(0.9850);">3mm</div>
<div class="tx" style="left:849.60px;top:279.77px;font-size:15.2px;color:#000;transform:scaleX(0.9600);">2</div>
<div class="tx" style="left:895.61px;top:279.77px;font-size:15.2px;color:#000;transform:scaleX(0.9859);">150mm</div>
<div class="tx" style="left:994.00px;top:279.77px;font-size:15.2px;color:#000;transform:scaleX(0.9822);">715mm</div>
<div class="tx" style="left:1099.40px;top:279.77px;font-size:15.2px;color:#000;transform:scaleX(0.9797);">65mm</div>
<div class="tx" style="left:1208.60px;top:279.77px;font-size:15.2px;color:#000;transform:scaleX(0.9850);">3mm</div>
<div class="tx" style="left:849.60px;top:303.51px;font-size:15.2px;color:#000;transform:scaleX(0.9600);">3</div>
<div class="tx" style="left:895.61px;top:303.51px;font-size:15.2px;color:#000;transform:scaleX(0.9859);">150mm</div>
<div class="tx" style="left:994.00px;top:303.51px;font-size:15.2px;color:#000;transform:scaleX(0.9822);">780mm</div>
<div class="tx" style="left:1099.40px;top:303.51px;font-size:15.2px;color:#000;transform:scaleX(0.9797);">65mm</div>
<div class="tx" style="left:1208.60px;top:303.51px;font-size:15.2px;color:#000;transform:scaleX(0.9850);">3mm</div>
<div class="tx" style="left:849.60px;top:327.25px;font-size:15.2px;color:#000;transform:scaleX(0.9600);">4</div>
<div class="tx" style="left:895.61px;top:327.25px;font-size:15.2px;color:#000;transform:scaleX(0.9859);">150mm</div>
<div class="tx" style="left:994.00px;top:327.25px;font-size:15.2px;color:#000;transform:scaleX(0.9822);">845mm</div>
<div class="tx" style="left:1099.40px;top:327.25px;font-size:15.2px;color:#000;transform:scaleX(0.9797);">65mm</div>
<div class="tx" style="left:1208.60px;top:327.25px;font-size:15.2px;color:#000;transform:scaleX(0.9850);">3mm</div>
<div class="tx" style="left:849.60px;top:350.99px;font-size:15.2px;color:#000;transform:scaleX(0.9600);">5</div>
<div class="tx" style="left:895.61px;top:350.99px;font-size:15.2px;color:#000;transform:scaleX(0.9859);">150mm</div>
<div class="tx" style="left:994.00px;top:350.99px;font-size:15.2px;color:#000;transform:scaleX(0.9822);">910mm</div>
<div class="tx" style="left:1099.40px;top:350.99px;font-size:15.2px;color:#000;transform:scaleX(0.9797);">65mm</div>
<div class="tx" style="left:1208.60px;top:350.99px;font-size:15.2px;color:#000;transform:scaleX(0.9850);">3mm</div>
<div class="tx" style="left:849.60px;top:374.73px;font-size:15.2px;color:#000;transform:scaleX(0.9600);">6</div>
<div class="tx" style="left:895.61px;top:374.73px;font-size:15.2px;color:#000;transform:scaleX(0.9859);">150mm</div>
<div class="tx" style="left:994.00px;top:374.73px;font-size:15.2px;color:#000;transform:scaleX(0.9822);">975mm</div>
<div class="tx" style="left:1099.40px;top:374.73px;font-size:15.2px;color:#000;transform:scaleX(0.9797);">65mm</div>
<div class="tx" style="left:1208.60px;top:374.73px;font-size:15.2px;color:#000;transform:scaleX(0.9850);">3mm</div>
<div class="tx" style="left:849.60px;top:398.47px;font-size:15.2px;color:#000;transform:scaleX(0.9600);">7</div>
<div class="tx" style="left:895.61px;top:398.47px;font-size:15.2px;color:#000;transform:scaleX(0.9859);">150mm</div>
<div class="tx" style="left:993.02px;top:398.47px;font-size:15.2px;color:#000;transform:scaleX(0.9819);">1040mm</div>
<div class="tx" style="left:1099.40px;top:398.47px;font-size:15.2px;color:#000;transform:scaleX(0.9797);">65mm</div>
<div class="tx" style="left:1208.60px;top:398.47px;font-size:15.2px;color:#000;transform:scaleX(0.9850);">3mm</div>
<div class="tx" style="left:849.60px;top:422.21px;font-size:15.2px;color:#000;transform:scaleX(0.9600);">8</div>
<div class="tx" style="left:895.61px;top:422.21px;font-size:15.2px;color:#000;transform:scaleX(0.9859);">150mm</div>
<div class="tx" style="left:993.00px;top:422.21px;font-size:15.2px;color:#000;transform:scaleX(1.0016);">1105mm</div>
<div class="tx" style="left:1099.40px;top:422.21px;font-size:15.2px;color:#000;transform:scaleX(0.9797);">65mm</div>
<div class="tx" style="left:1208.60px;top:422.21px;font-size:15.2px;color:#000;transform:scaleX(0.9850);">3mm</div>
<div class="tx" style="left:849.60px;top:445.95px;font-size:15.2px;color:#000;transform:scaleX(0.9600);">9</div>
<div class="tx" style="left:895.61px;top:445.95px;font-size:15.2px;color:#000;transform:scaleX(0.9859);">150mm</div>
<div class="tx" style="left:993.00px;top:445.95px;font-size:15.2px;color:#000;transform:scaleX(1.0016);">1170mm</div>
<div class="tx" style="left:1099.40px;top:445.95px;font-size:15.2px;color:#000;transform:scaleX(0.9797);">65mm</div>
<div class="tx" style="left:1208.60px;top:445.95px;font-size:15.2px;color:#000;transform:scaleX(0.9850);">3mm</div>
<div class="tx" style="left:848.64px;top:469.69px;font-size:15.2px;color:#000;transform:scaleX(0.9600);">10</div>
<div class="tx" style="left:895.61px;top:469.69px;font-size:15.2px;color:#000;transform:scaleX(0.9859);">150mm</div>
<div class="tx" style="left:993.02px;top:469.69px;font-size:15.2px;color:#000;transform:scaleX(0.9819);">1235mm</div>
<div class="tx" style="left:1099.40px;top:469.69px;font-size:15.2px;color:#000;transform:scaleX(0.9797);">65mm</div>
<div class="tx" style="left:1208.60px;top:469.69px;font-size:15.2px;color:#000;transform:scaleX(0.9850);">3mm</div>
<div class="tx" style="left:848.64px;top:493.43px;font-size:15.2px;color:#000;transform:scaleX(0.9600);">11</div>
<div class="tx" style="left:895.61px;top:493.43px;font-size:15.2px;color:#000;transform:scaleX(0.9859);">150mm</div>
<div class="tx" style="left:993.02px;top:493.43px;font-size:15.2px;color:#000;transform:scaleX(0.9819);">1300mm</div>
<div class="tx" style="left:1099.40px;top:493.43px;font-size:15.2px;color:#000;transform:scaleX(0.9797);">65mm</div>
<div class="tx" style="left:1208.60px;top:493.43px;font-size:15.2px;color:#000;transform:scaleX(0.9850);">3mm</div>
<div class="tx" style="left:848.64px;top:517.17px;font-size:15.2px;color:#000;transform:scaleX(0.9600);">12</div>
<div class="tx" style="left:895.61px;top:517.17px;font-size:15.2px;color:#000;transform:scaleX(0.9859);">150mm</div>
<div class="tx" style="left:993.02px;top:517.17px;font-size:15.2px;color:#000;transform:scaleX(0.9819);">1365mm</div>
<div class="tx" style="left:1099.40px;top:517.17px;font-size:15.2px;color:#000;transform:scaleX(0.9797);">65mm</div>
<div class="tx" style="left:1208.60px;top:517.17px;font-size:15.2px;color:#000;transform:scaleX(0.9850);">3mm</div>
<div class="tx" style="left:848.64px;top:540.91px;font-size:15.2px;color:#000;transform:scaleX(0.9600);">13</div>
<div class="tx" style="left:895.61px;top:540.91px;font-size:15.2px;color:#000;transform:scaleX(0.9859);">150mm</div>
<div class="tx" style="left:993.02px;top:540.91px;font-size:15.2px;color:#000;transform:scaleX(0.9819);">1430mm</div>
<div class="tx" style="left:1099.40px;top:540.91px;font-size:15.2px;color:#000;transform:scaleX(0.9797);">65mm</div>
<div class="tx" style="left:1208.60px;top:540.91px;font-size:15.2px;color:#000;transform:scaleX(0.9850);">3mm</div>
<div class="tx" style="left:848.64px;top:564.65px;font-size:15.2px;color:#000;transform:scaleX(0.9600);">14</div>
<div class="tx" style="left:895.61px;top:564.65px;font-size:15.2px;color:#000;transform:scaleX(0.9859);">150mm</div>
<div class="tx" style="left:993.02px;top:564.65px;font-size:15.2px;color:#000;transform:scaleX(0.9819);">1495mm</div>
<div class="tx" style="left:1099.40px;top:564.65px;font-size:15.2px;color:#000;transform:scaleX(0.9797);">65mm</div>
<div class="tx" style="left:1208.60px;top:564.65px;font-size:15.2px;color:#000;transform:scaleX(0.9850);">3mm</div>
<div class="tx" style="left:848.64px;top:588.39px;font-size:15.2px;color:#000;transform:scaleX(0.9600);">15</div>
<div class="tx" style="left:895.61px;top:588.39px;font-size:15.2px;color:#000;transform:scaleX(0.9859);">150mm</div>
<div class="tx" style="left:993.02px;top:588.39px;font-size:15.2px;color:#000;transform:scaleX(0.9819);">1560mm</div>
<div class="tx" style="left:1099.40px;top:588.39px;font-size:15.2px;color:#000;transform:scaleX(0.9797);">65mm</div>
<div class="tx" style="left:1208.60px;top:588.39px;font-size:15.2px;color:#000;transform:scaleX(0.9850);">3mm</div>
<div class="ab" style="left:1716px;top:225px;width:19px;height:384px;background:#f0f0f0"></div>
<div class="ab" style="left:1716px;top:246px;width:19px;height:22px;background:#cdcdcd"></div>
<svg class="ab" style="left:1716px;top:225px" width="19" height="384"><path d="M4.5 13.5L9.5 8L14.5 13.5" stroke="#404040" stroke-width="1.8" fill="none"/><path d="M4.5 370.5L9.5 376.5L14.5 370.5" stroke="#404040" stroke-width="1.8" fill="none"/></svg>
<div class="btn" style="left:839.5px;top:619.2px;width:90px;height:26.5px"></div>
<div class="tx" style="left:847.65px;top:625.19px;font-size:15.6px;color:#000;transform:scaleX(0.9474);">Edit table...</div>
<div class="ab" style="left:1561px;top:625px;width:15.5px;height:14.5px;border:1.5px solid #333;background:#fff"></div>
<div class="tx" style="left:1580.03px;top:624.79px;font-size:15.6px;color:#000;transform:scaleX(0.9690);">Duplicate data in model</div>
<div class="btn" style="left:1523.5px;top:656.5px;width:61px;height:27px"></div>
<div class="tx" style="left:1543.00px;top:662.29px;font-size:15.6px;color:#000;transform:scaleX(0.8301);">OK</div>
<div class="btn" style="left:1599.6px;top:656.5px;width:61px;height:27px"></div>
<div class="tx" style="left:1610.80px;top:662.29px;font-size:15.6px;color:#000;transform:scaleX(0.9691);">Apply</div>
<div class="btn" style="left:1676.2px;top:656.5px;width:60.5px;height:27px"></div>
<div class="tx" style="left:1684.60px;top:662.29px;font-size:15.6px;color:#000;transform:scaleX(0.9173);">Cancel</div>
</body></html>
